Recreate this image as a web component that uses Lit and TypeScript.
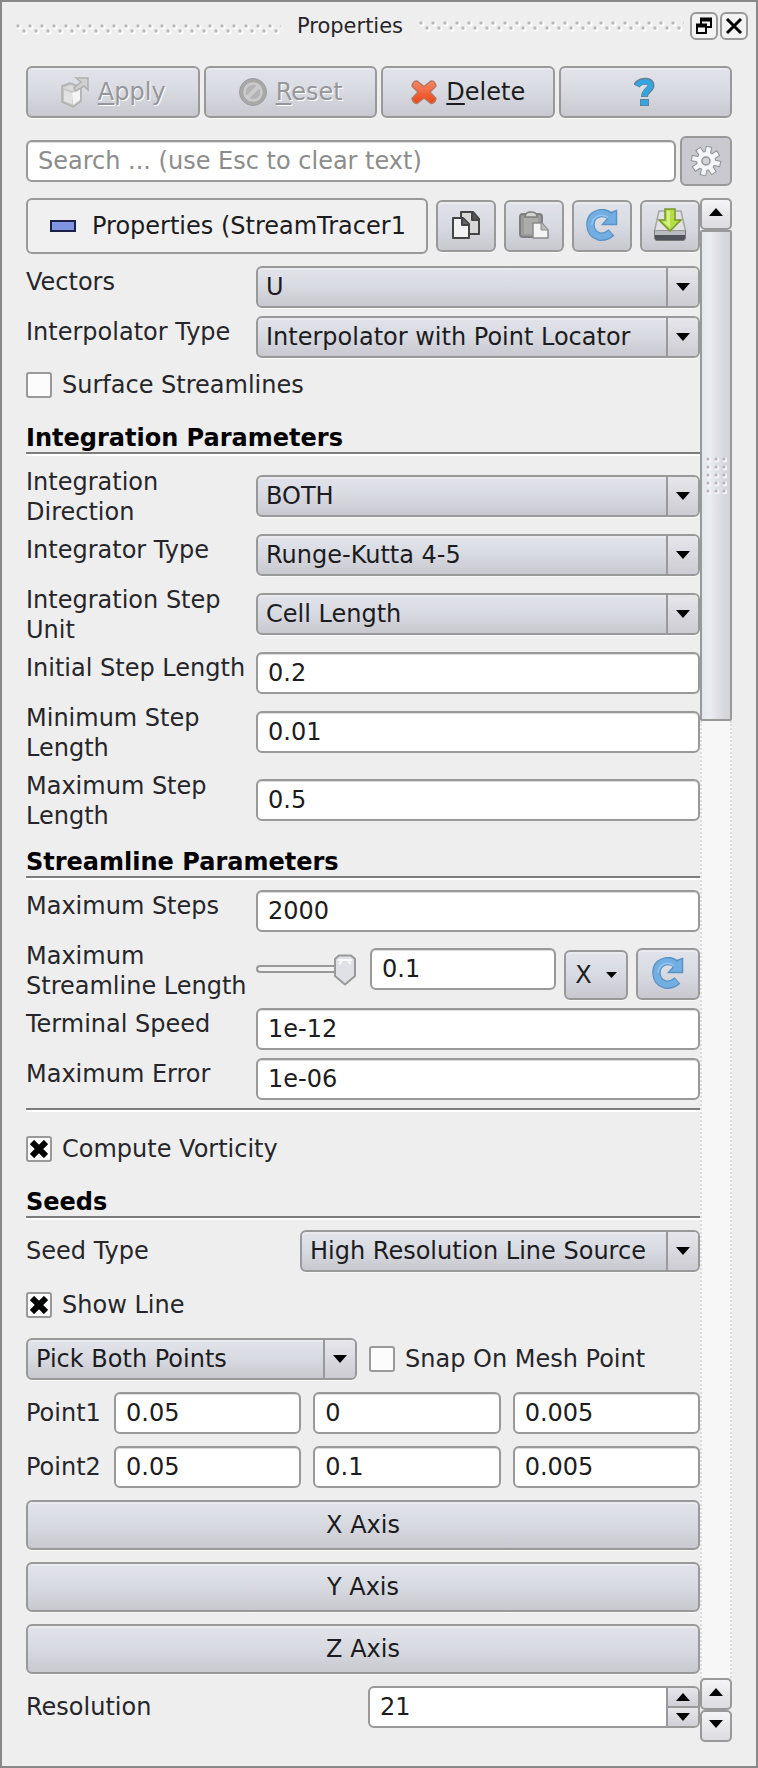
import { LitElement, html, css, svg, nothing } from "lit";
import { customElement, property } from "lit/decorators.js";

const controls = css`
  * {
    box-sizing: border-box;
  }
  button,
  input,
  select {
    margin: 0;
    font: inherit;
    color: #1c1c20;
  }
  .raised {
    border: 2px solid #999;
    border-radius: 6px;
    background: linear-gradient(#e2e3ea, #d9dbe3 45%, #c9c8cf);
    box-shadow: inset 0 2px 0 #e9e9ee, 0 1px 0 #f8f8f8;
  }
  .field {
    width: 100%;
    min-width: 0;
    height: 42px;
    padding: 0 10px;
    border: 2px solid #999;
    border-radius: 6px;
    background: #fff;
    box-shadow: inset 0 1px 0 #ddd;
  }
  svg {
    display: block;
  }
`;

const arrow = (up = false, w = 14, h = 8) => html`<svg width=${w} height=${h} viewBox="0 0 14 8" preserveAspectRatio="none">
  <path d=${up ? "M7 0L14 8H0Z" : "M0 0H14L7 8Z"} fill="#000" />
</svg>`;

const icons = {
  apply: html`<svg width="30" height="32" viewBox="0 0 30 32">
    <path d="M2 10L10 7L21 11V25L13 31L2 26Z" fill="#c4c4c4" stroke="#b0b0b0" stroke-width="1.5" />
    <path d="M4 14L12 17V28L4 25Z" fill="#e2e2e2" />
    <path d="M12 17L20 13V24L13 29Z" fill="#f4f4f4" />
    <path d="M3 12L11 9L19 12L12 15Z" fill="#dadada" />
    <path d="M16 2H28V14L24 10L16 15L14 12L21 6Z" fill="#d0d0d2" stroke="#b0b0b0" stroke-width="1.5" />
  </svg>`,
  reset: html`<svg width="30" height="30" viewBox="0 0 30 30">
    <circle cx="15" cy="15" r="13.5" fill="#a8a8a8" stroke="#9c9c9c" />
    <circle cx="15" cy="15" r="8.5" fill="#b4b4b4" stroke="#cbcbcb" stroke-width="2.500" />
    <path d="M9 21L21 9" stroke="#cbcbcb" stroke-width="4" />
  </svg>`,
  remove: html`<svg width="28" height="28" viewBox="0 0 28 28">
    <defs>
      <linearGradient id="r" x1="0" y1="0" x2="0" y2="1">
        <stop offset="0" stop-color="#f58a68" />
        <stop offset="1" stop-color="#ee4310" />
      </linearGradient>
    </defs>
    <path
      d="M7 3L14 8.500L21 3Q25 3 26 8L20 14L26 20.500Q25 25 21 25.500L14 20L7 25.500Q3 25 2 20.500L8 14L2 8Q3 3 7 3Z"
      fill="url(#r)" stroke="#b9755f" stroke-width="1.500" stroke-linejoin="round" />
  </svg>`,
  help: html`<svg width="22" height="30" viewBox="0 0 22 30">
    <g fill="none" stroke="#5f8396" stroke-width="7">
      <path d="M2.500 9C5 3.500 17 2 17 8.500C17 13 10.500 13 10.500 20" />
      <path d="M10.500 22V29" stroke-width="9" />
    </g>
    <g fill="none" stroke="#35a6e2" stroke-width="5">
      <path d="M3.300 8.500C6 4 16.500 3 16.500 8.500C16.500 13 10.500 13 10.500 19.300" />
      <path d="M10.500 23V28" stroke-width="7" />
    </g>
  </svg>`,
  gear: html`<svg width="32" height="32" viewBox="-16 -16 32 32">
    <g stroke="#8e9298" stroke-width="6.500">
      ${[0, 45, 90, 135].map((a) => svg`<path d="M0 -15V15" transform="rotate(${a + 12})" />`)}
    </g>
    <circle r="10" fill="#8e9298" />
    <g stroke="#f4f5f6" stroke-width="4.500">
      ${[0, 45, 90, 135].map((a) => svg`<path d="M0 -14V14" transform="rotate(${a + 12})" />`)}
    </g>
    <circle r="9" fill="#f4f5f6" />
    <circle r="4" fill="#d2d3d7" stroke="#8e9298" stroke-width="1.500" />
  </svg>`,
  copy: html`<svg width="30" height="30" viewBox="0 0 30 30" stroke="#444" stroke-width="2" stroke-linejoin="round">
    <path d="M10 2H22L28 9V24H10Z" fill="#d8d8d8" />
    <path d="M21 2V10H28" fill="#555" />
    <path d="M2 8H12L18 14V28H2Z" fill="#f2f2f2" />
    <path d="M11 8V15H18" fill="#666" />
  </svg>`,
  paste: html`<svg width="30" height="30" viewBox="0 0 30 30">
    <rect x="1" y="4" width="22" height="23" rx="3" fill="#9b9b9b" stroke="#7e7e7e" stroke-width="2" />
    <path d="M5 7H19V24H5Z" fill="#ababab" />
    <path d="M6 7Q6 2 12 2Q18 2 18 7Z" fill="#d4d4d4" stroke="#7e7e7e" stroke-width="1.500" />
    <path d="M14 13H23L29 20V28H14Z" fill="#f4f4f4" stroke="#8b8b8b" stroke-width="1.500" stroke-linejoin="round" />
    <path d="M22 13V20H29" fill="#bbb" stroke="#8b8b8b" />
  </svg>`,
  refresh: html`<svg width="32" height="32" viewBox="0 0 32 32">
    <path d="M24 7Q19 3 13 4.500Q4 7 4.500 16.500Q5 25 13 27.500Q20 28.500 25.500 23.500" fill="none" stroke="#5a92c4" stroke-width="8.500" />
    <path d="M30.500 1.500V15.500H16.500L20.500 11L23 9L26 3Z" fill="#72aee2" stroke="#5a92c4" stroke-width="1.500" />
    <path d="M25 8.500Q19 3 13 4.500Q4 7 4.500 16.500Q5 25 13 27.500Q19.500 28.500 24.800 24" fill="none" stroke="#72aee2" stroke-width="6" />
    <path d="M6 16Q6 9 13 6.500Q18 5.500 22 8.500" fill="none" stroke="#93c4ee" stroke-width="1.500" />
  </svg>`,
  save: html`<svg width="34" height="34" viewBox="0 0 34 34">
    <path d="M6 3H28L32.500 23H1.500Z" fill="#e2e2e2" stroke="#a5a5a5" stroke-width="1.500" />
    <path d="M1.500 23H32.500V30Q32 32.500 30 32.500H4Q2 32.500 1.500 30Z" fill="#50545a" stroke="#777" />
    <path d="M2 23H32V27H2Z" fill="#b9bcc0" />
    <path d="M12 1H22V12H28L17 23L6 12H12Z" fill="#b5dd45" stroke="#74962b" stroke-width="1.500" />
    <path d="M14 3H17V20L10 13.500H14Z" fill="#d6ef83" />
  </svg>`,
  float: html`<svg width="18" height="18" viewBox="0 0 18 18" fill="none" stroke="#000" stroke-width="2">
    <rect x="6" y="2" width="10" height="8" />
    <path d="M5 2.500H17" stroke-width="4" />
    <rect x="2" y="8" width="9" height="8" fill="#f4f4f4" />
    <path d="M1 8.500H12" stroke-width="4" />
  </svg>`,
  close: html`<svg width="18" height="18" viewBox="0 0 18 18">
    <path d="M2 2L16 16M16 2L2 16" stroke="#000" stroke-width="3" />
  </svg>`,
  group: html`<svg width="26" height="12" viewBox="0 0 26 12">
    <rect x="1" y="1" width="24" height="10" fill="#8094e4" stroke="#1c2148" stroke-width="2" />
  </svg>`,
};

@customElement("pv-combo")
class PvCombo extends LitElement {
  @property() value = "";
  @property() label = "";
  static styles = [
    controls,
    css`
      :host {
        display: block;
        min-width: 0;
      }
      .combo {
        display: grid;
        grid-template-columns: minmax(0, 1fr) 32px;
        height: 42px;
        overflow: hidden;
      }
      .select {
        grid-area: 1 / 1 / 2 / 3;
        appearance: none;
        width: 100%;
        border: 0;
        padding: 0 0 0 8px;
        background: none;
      }
      .arrow {
        grid-area: 1 / 2;
        display: grid;
        place-items: center;
        border-left: 2px solid #999;
        background: linear-gradient(#e6e6eb, #cdccd3);
        pointer-events: none;
      }
    `,
  ];
  render() {
    return html`<div class="combo raised">
      <select class="select" aria-label=${this.label}>
        <option selected>${this.value}</option>
      </select>
      <span class="arrow">${arrow()}</span>
    </div>`;
  }
}

@customElement("pv-check")
class PvCheck extends LitElement {
  @property() label = "";
  @property({ type: Boolean }) on = false;
  static styles = [
    controls,
    css`
      :host {
        display: block;
      }
      .check {
        display: flex;
        align-items: center;
        gap: 10px;
        height: 42px;
        white-space: nowrap;
      }
      .box {
        appearance: none;
        flex: none;
        width: 26px;
        height: 26px;
        border: 2px solid #999;
        border-radius: 3px;
        background: #fcfcfc center / 18px no-repeat;
      }
      .box:checked {
        background-image: url("data:image/svg+xml,%3Csvg xmlns='http://www.w3.org/2000/svg' viewBox='0 0 18 18'%3E%3Cpath d='M2 2L16 16M16 2L2 16' stroke='black' stroke-width='6'/%3E%3C/svg%3E");
      }
    `,
  ];
  render() {
    return html`<label class="check"><input class="box" type="checkbox" .checked=${this.on} />${this.label}</label>`;
  }
}

@customElement("app-root")
class AppRoot extends LitElement {
  static styles = [
    controls,
    css`
      :host {
        display: block;
        font: 24px/30px "DejaVu Sans", sans-serif;
        color: #26262a;
      }
      .panel {
        border: 2px solid #888;
        padding: 10px 24px 24px;
        background: #eee;
      }
      .title {
        display: flex;
        align-items: center;
        gap: 16px;
        height: 28px;
        margin: 0 -16px 26px -10px;
      }
      .title h1 {
        margin: 0;
        font-size: 21px;
        line-height: 24px;
        font-weight: 400;
      }
      .grip {
        flex: 1;
        height: 12px;
      }
      .grip.low {
        align-self: end;
        margin-bottom: 5px;
      }
      .window {
        display: flex;
        gap: 2px;
        margin-left: -10px;
      }
      .tiny {
        display: grid;
        place-items: center;
        width: 28px;
        height: 28px;
        padding: 0;
        border: 2px solid #999;
        border-radius: 6px;
        background: #f3f3f3;
      }
      .actions {
        display: grid;
        grid-template-columns: repeat(4, 1fr);
        gap: 4px;
        margin-bottom: 18px;
      }
      .action {
        display: flex;
        align-items: center;
        justify-content: center;
        gap: 8px;
        height: 52px;
        padding: 0;
      }
      .action:disabled {
        color: #96969a;
        text-shadow: 1px 1px 0 #fff;
      }
      .action u {
        text-decoration-thickness: 2px;
        text-underline-offset: 3px;
      }
      .search {
        display: flex;
        align-items: center;
        gap: 4px;
        margin-bottom: 12px;
      }
      .search .field {
        flex: 1;
      }
      .field::placeholder {
        color: #8c8c8c;
        opacity: 1;
      }
      .advanced {
        display: grid;
        place-items: center;
        width: 52px;
        height: 50px;
        padding: 0;
        border: 2px solid #999;
        border-radius: 6px;
        background: #c9c9cf;
      }
      .area {
        display: flex;
      }
      .content {
        flex: 1;
        min-width: 0;
        padding-bottom: 14px;
      }
      .group {
        display: flex;
        align-items: center;
        gap: 8px;
        margin-bottom: 12px;
      }
      .group-name {
        flex: 1;
        min-width: 0;
        display: flex;
        align-items: center;
        gap: 16px;
        height: 56px;
        padding: 0 0 0 22px;
        border: 2px solid #999;
        border-radius: 6px;
        background: #f0f0f0;
        text-align: left;
        white-space: nowrap;
        overflow: hidden;
      }
      .tool {
        display: grid;
        place-items: center;
        width: 60px;
        height: 52px;
        padding: 0 0 2px;
      }
      .form {
        display: grid;
        grid-template-columns: 222px minmax(0, 1fr);
        gap: 8px;
        align-items: center;
      }
      .form > label {
        align-self: start;
        margin: 1px 0 -1px;
      }
      .surface {
        margin-top: 6px;
      }
      .heading {
        margin: 18px 0 10px;
        border-bottom: 2px solid #fff;
        font-size: 24px;
        line-height: 28px;
        font-weight: 700;
        color: #000;
      }
      .heading span {
        display: block;
        border-bottom: 2px solid #7c7c7c;
      }
      .rule {
        height: 4px;
        margin: 8px 0 16px;
        border: 0;
        border-top: 2px solid #7c7c7c;
        background: #fff;
      }
      .length {
        display: flex;
        gap: 8px;
        height: 60px;
        padding-top: 8px;
      }
      .slider {
        appearance: none;
        flex: none;
        width: 100px;
        height: 42px;
        margin-right: 6px;
        background: none;
      }
      .slider::-webkit-slider-runnable-track {
        height: 8px;
        border: 2px solid #999;
        border-right: 0;
        border-radius: 4px;
        background: #f2f2f2;
      }
      .slider::-webkit-slider-thumb {
        appearance: none;
        width: 22px;
        height: 32px;
        margin-top: -13px;
        background: url("data:image/svg+xml,%3Csvg xmlns='http://www.w3.org/2000/svg' viewBox='0 0 22 32'%3E%3Cpath d='M5 1.500H17L21 5V22L11 30.500L1 22V5Z' fill='%23dfe1e6' stroke='%23999' stroke-width='2'/%3E%3Cpath d='M4 6H18M5 10L8 7M14 7L17 10' stroke='%23f8f8f8' stroke-width='2'/%3E%3C/svg%3E");
      }
      .scale {
        display: flex;
        align-items: center;
        justify-content: center;
        gap: 14px;
        flex: none;
        align-self: end;
        width: 64px;
        height: 50px;
        padding: 0;
      }
      .length .tool {
        flex: none;
        width: 64px;
      }
      .seeds {
        display: grid;
        gap: 12px;
      }
      .row {
        display: grid;
        align-items: center;
      }
      .row.type {
        grid-template-columns: 274px minmax(0, 1fr);
      }
      .row.pick {
        grid-template-columns: repeat(2, minmax(0, 1fr));
        gap: 12px;
      }
      .row.point {
        grid-template-columns: 76px repeat(3, minmax(0, 1fr));
        gap: 12px;
      }
      .row.resolution {
        grid-template-columns: repeat(2, minmax(0, 1fr));
        gap: 10px;
      }
      .axis {
        height: 50px;
        padding: 0;
      }
      .spin {
        display: grid;
        grid-template-columns: minmax(0, 1fr) 32px;
        height: 42px;
        border: 2px solid #999;
        border-radius: 6px;
        background: #fff;
        overflow: hidden;
      }
      .spin input {
        min-width: 0;
        padding: 0 10px;
        border: 0;
        background: none;
        appearance: textfield;
      }
      .spin input::-webkit-inner-spin-button {
        appearance: none;
      }
      .steps {
        display: grid;
        grid-template-rows: 1fr 1fr;
        gap: 2px;
        border-left: 2px solid #999;
        background: #999;
      }
      .step {
        display: grid;
        place-items: center;
        min-height: 0;
        padding: 0;
        border: 0;
        background: linear-gradient(#e6e6eb, #d0cfd6);
      }
      .scroll {
        display: flex;
        flex-direction: column;
        flex: none;
        width: 32px;
      }
      .scroll-step {
        display: grid;
        place-items: center;
        height: 32px;
        padding: 0 0 4px;
        border: 2px solid #999;
        border-radius: 5px;
        background: linear-gradient(#f4f4f6, #dcdce1);
      }
      .thumb {
        flex: 61;
        display: grid;
        place-items: center;
        border: 2px solid #999;
        border-radius: 2px;
        background: linear-gradient(90deg, #e4e6ea, #e9edf2 25%, #d6d5dc 85%);
      }
      .track {
        flex: 120;
        border: 2px dotted #dcdcdc;
        border-width: 0 2px;
        background: #f7f7f7;
      }
    `,
  ];

  private grip(id: string, low: boolean) {
    return html`<svg class="grip ${low ? "low" : ""}" aria-hidden="true">
      <defs>
        <pattern id=${id} width="12" height="12" patternUnits="userSpaceOnUse">
          <circle cx="3" cy="4" r="2.500" fill="#fff" />
          <circle cx="9" cy="9" r="2.500" fill="#fff" />
          <circle cx="2" cy="3" r="1.700" fill="#b8b8b8" />
          <circle cx="8" cy="8" r="1.700" fill="#b8b8b8" />
        </pattern>
      </defs>
      <rect width="100%" height="12" fill="url(#${id})" />
    </svg>`;
  }

  private text(id: string, label: string, value: string) {
    return html`<label for=${id}>${label}</label><input class="field" id=${id} .value=${value} />`;
  }

  private combo(label: string, value: string) {
    return html`<label>${label}</label><pv-combo label=${label} value=${value}></pv-combo>`;
  }

  private point(name: string, values: string[]) {
    return html`<div class="row point" role="group" aria-label=${name}>
      <label for=${name}>${name}</label>
      ${values.map(
        (v, i) => html`<input class="field" id=${i ? nothing : name} aria-label="${name} ${"XYZ"[i]}" .value=${v} />`
      )}
    </div>`;
  }

  render() {
    return html`<main class="panel">
      <header class="title">
        ${this.grip("ga", true)}
        <h1>Properties</h1>
        ${this.grip("gb", false)}
        <div class="window">
          <button class="tiny" aria-label="Float">${icons.float}</button>
          <button class="tiny" aria-label="Close">${icons.close}</button>
        </div>
      </header>
      <div class="actions">
        <button class="action raised" disabled>${icons.apply}<span><u>A</u>pply</span></button>
        <button class="action raised" disabled>${icons.reset}<span><u>R</u>eset</span></button>
        <button class="action raised">${icons.remove}<span><u>D</u>elete</span></button>
        <button class="action raised" aria-label="Help">${icons.help}</button>
      </div>
      <div class="search">
        <input class="field" aria-label="Search" placeholder="Search ... (use Esc to clear text)" />
        <button class="advanced" aria-label="Advanced properties" aria-pressed="true">${icons.gear}</button>
      </div>
      <div class="area">
        <div class="content">
          <div class="group">
            <button class="group-name" aria-expanded="true">${icons.group}Properties (StreamTracer1</button>
            <button class="tool raised" aria-label="Copy">${icons.copy}</button>
            <button class="tool raised" aria-label="Paste">${icons.paste}</button>
            <button class="tool raised" aria-label="Restore defaults">${icons.refresh}</button>
            <button class="tool raised" aria-label="Save as defaults">${icons.save}</button>
          </div>
          <div class="form">
            ${this.combo("Vectors", "U")} ${this.combo("Interpolator Type", "Interpolator with Point Locator")}
          </div>
          <pv-check class="surface" label="Surface Streamlines"></pv-check>

          <h2 class="heading"><span>Integration Parameters</span></h2>
          <div class="form">
            ${this.combo("Integration Direction", "BOTH")} ${this.combo("Integrator Type", "Runge-Kutta 4-5")}
            ${this.combo("Integration Step Unit", "Cell Length")} ${this.text("initial", "Initial Step Length", "0.2")}
            ${this.text("minimum", "Minimum Step Length", "0.01")} ${this.text("maximum", "Maximum Step Length", "0.5")}
          </div>

          <h2 class="heading"><span>Streamline Parameters</span></h2>
          <div class="form">
            ${this.text("steps", "Maximum Steps", "2000")}
            <label for="length">Maximum Streamline Length</label>
            <div class="length">
              <input class="slider" type="range" min="0" max="100" value="100" aria-label="Maximum Streamline Length" />
              <input class="field" id="length" .value=${"0.1"} />
              <button class="scale raised" aria-haspopup="menu">X${arrow(false, 11, 6)}</button>
              <button class="tool raised" aria-label="Reset length">${icons.refresh}</button>
            </div>
            ${this.text("speed", "Terminal Speed", "1e-12")} ${this.text("error", "Maximum Error", "1e-06")}
          </div>
          <hr class="rule" />
          <pv-check label="Compute Vorticity" on></pv-check>

          <h2 class="heading"><span>Seeds</span></h2>
          <div class="seeds">
            <div class="row type">${this.combo("Seed Type", "High Resolution Line Source")}</div>
            <pv-check label="Show Line" on></pv-check>
            <div class="row pick">
              <pv-combo label="Pick" value="Pick Both Points"></pv-combo>
              <pv-check label="Snap On Mesh Point"></pv-check>
            </div>
            ${this.point("Point1", ["0.05", "0", "0.005"])} ${this.point("Point2", ["0.05", "0.1", "0.005"])}
            ${["X Axis", "Y Axis", "Z Axis"].map((t) => html`<button class="axis raised">${t}</button>`)}
            <div class="row resolution">
              <label for="resolution">Resolution</label>
              <div class="spin">
                <input id="resolution" type="number" value="21" />
                <div class="steps">
                  <button class="step" aria-label="Increase">${arrow(true)}</button>
                  <button class="step" aria-label="Decrease">${arrow()}</button>
                </div>
              </div>
            </div>
          </div>
        </div>
        <div class="scroll">
          <button class="scroll-step" aria-label="Scroll up">${arrow(true)}</button>
          <div class="thumb">
            <svg width="22" height="38" viewBox="0 0 22 38">
              ${[0, 1, 2, 3, 4].map((r) =>
                [0, 1, 2].map(
                  (c) => svg`<circle cx=${4 + c * 8} cy=${4 + r * 8} r="2.400" fill="#f6f6f8" />
                  <circle cx=${3 + c * 8} cy=${3 + r * 8} r="1.500" fill="#b2b2b8" />`
                )
              )}
            </svg>
          </div>
          <div class="track"></div>
          <button class="scroll-step" aria-label="Page up">${arrow(true)}</button>
          <button class="scroll-step" aria-label="Scroll down">${arrow()}</button>
        </div>
      </div>
    </main>`;
  }
}
